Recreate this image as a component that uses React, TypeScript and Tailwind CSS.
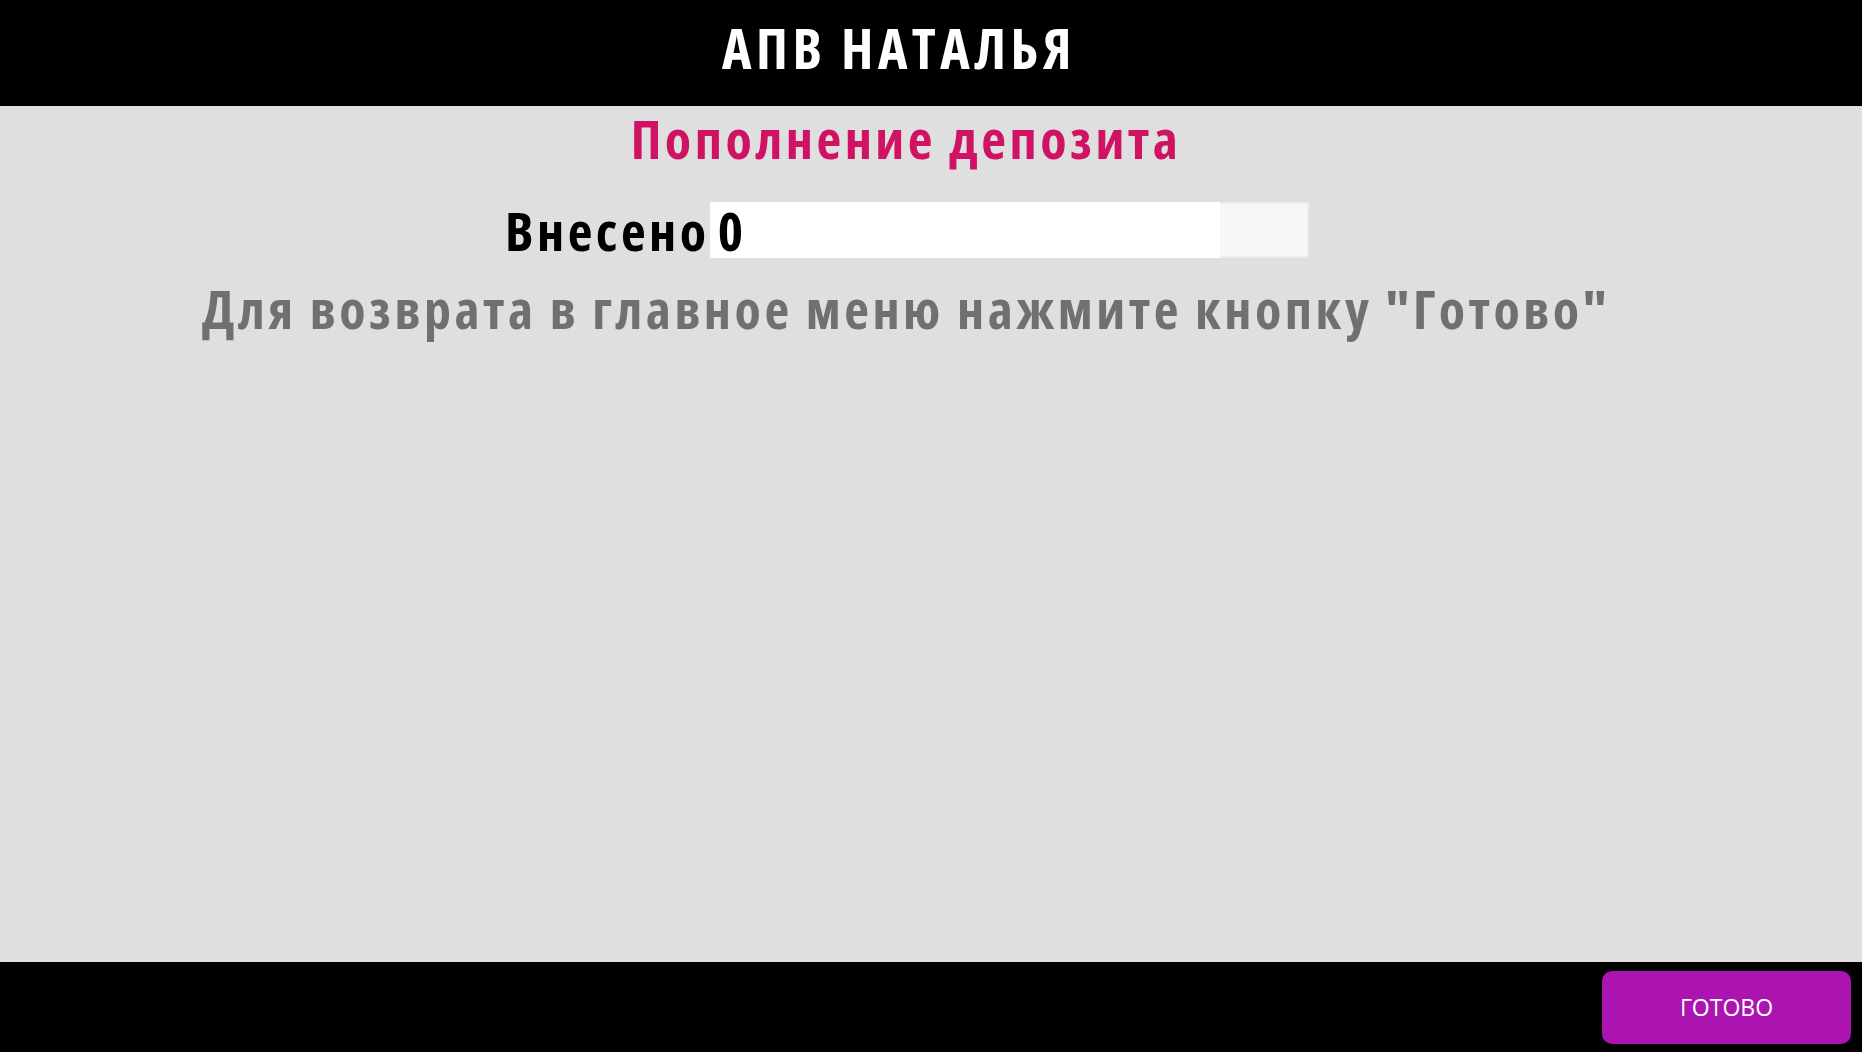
const condensed = {
  fontFamily: '"Open Sans", "DejaVu Sans", sans-serif',
};

export default function App() {
  return (
    <div
      className="flex h-[1052px] w-[1862px] flex-col bg-[#dfdfdf] font-stretch-condensed"
      style={condensed}
    >
      {/* header */}
      <div className="flex h-[106px] shrink-0 items-center bg-black pb-[12px]">
        <div className="w-[1798px] text-center text-[56px] font-bold leading-none tracking-[4.5px] text-white">
          АПВ НАТАЛЬЯ
        </div>
      </div>

      {/* body */}
      <div className="flex w-[1812px] flex-1 flex-col">
        <h1 className="mt-[2px] text-center text-[54px] font-bold leading-[60px] tracking-[3.5px] text-[#cf1263]">
          Пополнение депозита
        </h1>
        <div className="mt-[34px] flex items-center pl-[505px]">
          <span className="text-[54px] font-bold leading-none tracking-[3.5px] text-black">
            Внесено
          </span>
          <div className="relative flex h-[56px] w-[599px] items-center border-2 border-[#ececec] bg-[#f7f7f7]">
            <div className="absolute -top-[2px] -left-[2px] h-[56px] w-[510px] bg-white" />
            <span className="relative pl-[6px] text-[54px] font-bold leading-none text-black">
              0
            </span>
          </div>
        </div>
        <p className="mt-[20px] text-center text-[54px] font-bold leading-[60px] tracking-[3.5px] text-[#707070]">
          Для возврата в главное меню нажмите кнопку "Готово"
        </p>
      </div>

      {/* footer */}
      <div className="flex h-[90px] shrink-0 items-center justify-end bg-black pr-[11px]">
        <button
          type="button"
          className="flex h-[73px] w-[249px] items-center justify-center rounded-[10px] bg-[#ab14b0] text-[23px] font-stretch-normal text-white"
        >
          ГОТОВО
        </button>
      </div>
    </div>
  );
}
